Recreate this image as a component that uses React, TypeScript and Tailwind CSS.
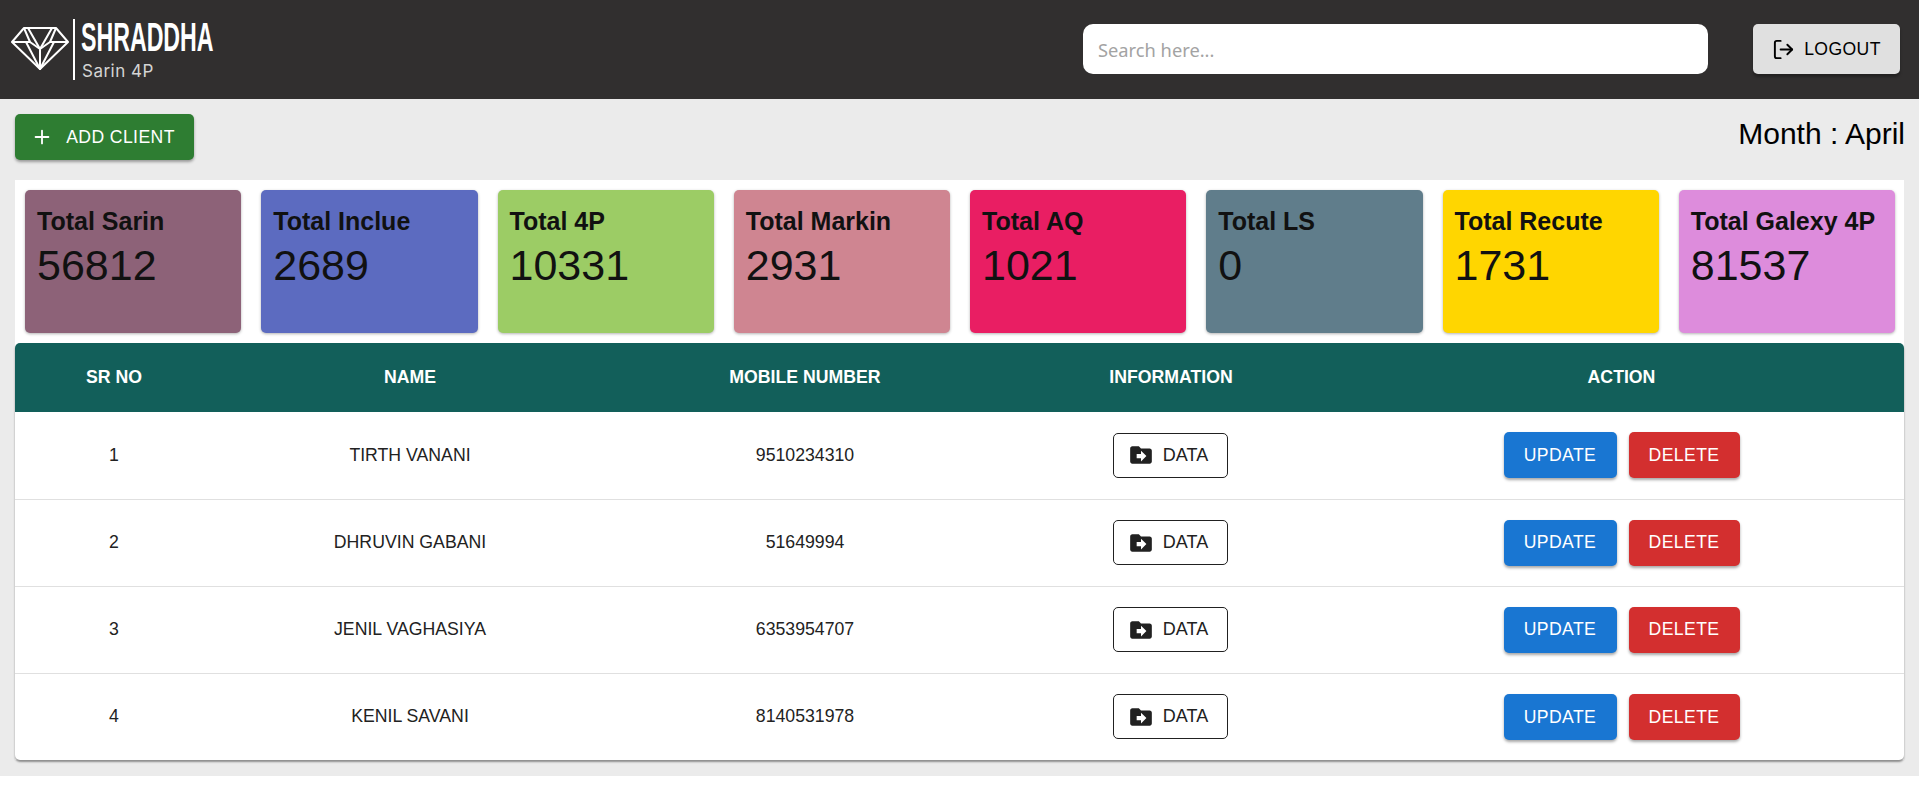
import { Plus, LogOut } from 'lucide-react';

const stats = [
  { label: 'Total Sarin', value: '56812', color: 'bg-[#8d6278]' },
  { label: 'Total Inclue', value: '2689', color: 'bg-[#5c6bc0]' },
  { label: 'Total 4P', value: '10331', color: 'bg-[#9ccc65]' },
  { label: 'Total Markin', value: '2931', color: 'bg-[#cf8591]' },
  { label: 'Total AQ', value: '1021', color: 'bg-[#e91e63]' },
  { label: 'Total LS', value: '0', color: 'bg-[#607d8b]' },
  { label: 'Total Recute', value: '1731', color: 'bg-[#ffd600]' },
  { label: 'Total Galexy 4P', value: '81537', color: 'bg-[#dd8cdc]' },
];

const clients = [
  { id: 1, name: 'TIRTH VANANI', mobile: '9510234310' },
  { id: 2, name: 'DHRUVIN GABANI', mobile: '51649994' },
  { id: 3, name: 'JENIL VAGHASIYA', mobile: '6353954707' },
  { id: 4, name: 'KENIL SAVANI', mobile: '8140531978' },
];

function Diamond() {
  return (
    <svg viewBox="0 0 58 44" className="h-[44px] w-[58px] shrink-0" fill="none" stroke="white" strokeWidth="2" strokeLinejoin="round">
      <path d="M1 15 13 1H45L57 15 29 42Z" />
      <path d="M1 15H19L29 22 39 15H57" />
      <path d="M13 1 19 15M45 1 39 15M17 1 29 22 41 1" />
      <path d="M15 15 29 42 43 15M29 22V42" />
    </svg>
  );
}

function FolderIcon() {
  return (
    <svg viewBox="0 0 24 24" className="h-[26px] w-[26px]" fill="#212121">
      <path d="M20 6h-8l-2-2H4c-1.1 0-2 .9-2 2v12c0 1.1.9 2 2 2h16c1.1 0 2-.9 2-2V8c0-1.1-.9-2-2-2m-8 12v-3H8v-4h4V8l5 5z" />
    </svg>
  );
}

export default function App() {
  return (
    <div className="min-h-[796px] bg-white font-['Liberation_Sans',Arial,sans-serif]">
      <header className="flex h-[99px] items-center bg-[#312f2f] pb-[1px] pl-[11px] pr-[19px]">
        <Diamond />
        <div className="ml-[4px] h-[61px] w-[2px] bg-white" />
        <div className="ml-[6px] flex flex-col">
          <div className="h-[38px] w-[134px] origin-left scale-x-[0.565] text-[41px] leading-[40px] font-bold whitespace-nowrap text-white">SHRADDHA</div>
          <div className="mt-[6px] ml-[1px] font-['Inter',sans-serif] text-[17px] leading-[20px] tracking-[0.5px] text-[#d4d4d4]">Sarin 4P</div>
        </div>
        <input
          placeholder="Search here..."
          className="ml-auto h-[50px] w-[625px] rounded-[10px] bg-white px-[15px] font-['Noto_Sans',sans-serif] text-[18.3px] outline-none placeholder:text-[#a3a3a3]"
        />
        <button className="ml-[45px] flex h-[50px] w-[147px] items-center justify-center gap-[9px] rounded-[5px] bg-[#e0e0e0] text-[17.6px] tracking-[0.4px] text-black shadow-[0_3px_3px_rgba(0,0,0,0.3)]">
          <LogOut className="h-[23px] w-[23px]" strokeWidth={2} />
          LOGOUT
        </button>
      </header>

      <main className="flex h-[677px] flex-col bg-[#ebebeb] px-[15px] pt-[15px]">
        <div className="flex items-start justify-between">
          <button className="flex h-[46px] w-[179px] items-center justify-center gap-[13px] rounded-[5px] bg-[#2e7d32] pr-[3px] text-[17.6px] tracking-[0.4px] text-white shadow-[0_2px_3px_rgba(0,0,0,0.35)]">
            <Plus className="h-[22px] w-[22px]" strokeWidth={2} />
            ADD CLIENT
          </button>
          <div className="-mr-[1px] pt-[3px] text-[30px] leading-[34px] text-black">Month : April</div>
        </div>

        <section className="mt-[20px] bg-white">
          <div className="flex gap-[20px] pt-[10px] pr-[9px] pb-[10px] pl-[10px]">
            {stats.map((s) => (
              <div key={s.label} className={`h-[143px] flex-1 rounded-[5px] px-[12px] pt-[16px] text-[#111] shadow-[0_1px_3px_rgba(0,0,0,0.3)] ${s.color}`}>
                <div className="text-[25px] leading-[30px] font-bold whitespace-nowrap">{s.label}</div>
                <div className="mt-[4px] text-[43px] leading-[50px]">{s.value}</div>
              </div>
            ))}
          </div>

          <div className="overflow-hidden rounded-[5px] bg-white shadow-[0_2px_2px_rgba(0,0,0,0.4)]">
            <table className="w-full table-fixed border-collapse text-center text-[17.7px] text-[#222]">
              <thead>
                <tr className="h-[69px] bg-[#125f5a] text-white">
                  <th className="w-[198px] font-bold">SR NO</th>
                  <th className="w-[394px] font-bold">NAME</th>
                  <th className="w-[396px] font-bold">MOBILE NUMBER</th>
                  <th className="w-[336px] font-bold">INFORMATION</th>
                  <th className="font-bold">ACTION</th>
                </tr>
              </thead>
              <tbody>
                {clients.map((c, i) => (
                  <tr key={c.id} className={`h-[87px] ${i < clients.length - 1 ? 'border-b border-[#e0e0e0]' : ''}`}>
                    <td>{c.id}</td>
                    <td>{c.name}</td>
                    <td>{c.mobile}</td>
                    <td className="pr-[1px]">
                      <button className="mx-auto flex h-[45px] w-[115px] items-center justify-center gap-[9px] rounded-[5px] border border-[#212121] bg-white pr-[5px] text-[18px] text-[#212121]">
                        <FolderIcon />
                        DATA
                      </button>
                    </td>
                    <td>
                      <div className="flex justify-center gap-[12px]">
                        <button className="h-[46px] w-[113px] rounded-[5px] bg-[#1976d2] text-[17.6px] tracking-[0.4px] text-white shadow-[0_2px_3px_rgba(0,0,0,0.35)]">UPDATE</button>
                        <button className="h-[46px] w-[111px] rounded-[5px] bg-[#d32f2f] text-[17.6px] tracking-[0.4px] text-white shadow-[0_2px_3px_rgba(0,0,0,0.35)]">DELETE</button>
                      </div>
                    </td>
                  </tr>
                ))}
              </tbody>
            </table>
          </div>
        </section>
      </main>
    </div>
  );
}
